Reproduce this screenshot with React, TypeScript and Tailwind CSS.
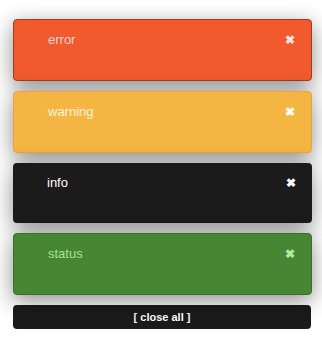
import React from "react";

const notes = [
  {
    label: "error",
    box: "h-[62px] border bg-[#f15a2c] border-[#a63a1b]",
    text: "text-[#fdd3d6]",
    x: "text-[#fde3e6]",
  },
  {
    label: "warning",
    box: "h-[62px] border bg-[#f5b543] border-[#eda53a]",
    text: "text-[#fff7dc]",
    x: "text-white",
  },
  {
    label: "info",
    box: "h-[60px] bg-[#1b1b1b]",
    text: "text-white",
    x: "text-white",
  },
  {
    label: "status",
    box: "h-[62px] border bg-[#478633] border-[#3a6e2a]",
    text: "text-[#a3e391]",
    x: "text-[#b5eaa6]",
  },
];

export default function App() {
  return (
    <div
      className="min-h-[351px] w-[322px] bg-white pl-[13px] pr-[10px] pt-[19px]"
      style={{ fontFamily: '"Liberation Sans", Arial, sans-serif' }}
    >
      <div className="flex flex-col gap-[10px]">
        {notes.map((n) => (
          <div
            key={n.label}
            className={`relative w-[299px] rounded-[4px] shadow-[0_6px_22px_rgba(0,0,0,0.45)] ${n.box}`}
          >
            <div className="flex items-start justify-between pl-[34px] pr-[16px] pt-[12px]">
              <span className={`text-[13px] leading-[16px] ${n.text}`}>{n.label}</span>
              <span className={`text-[12px] font-bold leading-[16px] ${n.x}`}>✖</span>
            </div>
          </div>
        ))}
        <div className="flex h-[24px] w-[298px] items-center justify-center rounded-[4px] bg-[#1b1b1b] text-[11px] font-bold text-white">
          [ close all ]
        </div>
      </div>
    </div>
  );
}
